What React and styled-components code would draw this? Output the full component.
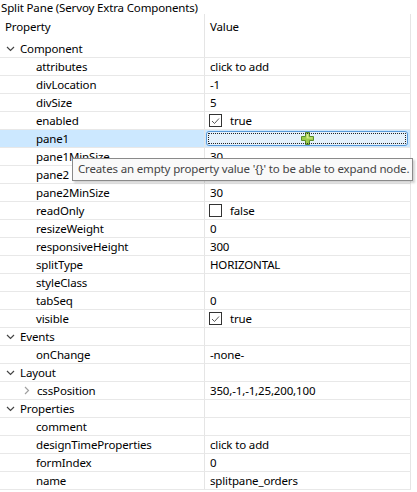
import styled, { createGlobalStyle } from "styled-components";

const GlobalStyle = createGlobalStyle`
  html, body { margin: 0; padding: 0; background: #ffffff; }
  body {
    font-family: "Segoe UI", "Noto Sans", "Open Sans", sans-serif;
    font-size: 11.5px;
    letter-spacing: -0.15px;
    color: #000;
  }
`;

const Panel = styled.div`
  position: relative;
  width: 417px;
  height: 492px;
  overflow: hidden;
  background: #ffffff;
`;

const Title = styled.div`
  height: 14px;
  line-height: 15px;
  padding-left: 1px;
  white-space: nowrap;
`;

const Grid = styled.div`
  display: grid;
  grid-template-columns: 205px 206px;
`;

const HeadCell = styled.div`
  height: 26px;
  box-sizing: border-box;
  padding: 5px 0 0 5px;
  border-right: 1px solid #e5e5e5;
`;

const Cell = styled.div`
  position: relative;
  height: 18px;
  box-sizing: border-box;
  display: flex;
  align-items: center;
  padding-left: ${(p) => p.$indent ?? 5}px;
  border-right: 1px solid #e5e5e5;
  border-bottom: 1px solid #e8e8e8;
  background: ${(p) => (p.$selected ? "#cce8ff" : "#ffffff")};
  white-space: nowrap;
  line-height: 17px;
`;

const Twisty = styled.span`
  display: inline-flex;
  width: ${(p) => p.$w}px;
  justify-content: flex-start;
  align-items: center;
`;

const Check = styled.span`
  width: 11px;
  height: 11px;
  border: 1px solid #333;
  margin: 0 8px 0 -1px;
  display: inline-flex;
  align-items: center;
  justify-content: center;
  background: #fff;
`;

const Editor = styled.div`
  flex: 1;
  height: 15px;
  margin: 0 2px 0 -4px;
  box-sizing: border-box;
  border: 1px solid #5a9ad8;
  border-radius: 3px;
  background: #e5f1fb;
  outline: 1px dotted #222;
  outline-offset: -3px;
  display: flex;
  align-items: center;
  justify-content: center;
`;

const Tooltip = styled.div`
  position: absolute;
  left: 72px;
  top: 158px;
  width: 341px;
  height: 23px;
  box-sizing: border-box;
  border: 1px solid #8a8a8a;
  background: #f9f9f9;
  color: #444;
  padding-left: 5px;
  line-height: 20px;
  white-space: nowrap;
  box-shadow: 2px 2px 2px rgba(0, 0, 0, 0.18);
`;

const Down = () => (
  <svg width="9" height="6" viewBox="0 0 9 6">
    <path d="M1 1 L4.5 4.5 L8 1" fill="none" stroke="#444" strokeWidth="1.2" />
  </svg>
);

const Right = () => (
  <svg width="6" height="9" viewBox="0 0 6 9">
    <path d="M1 1 L4.5 4.5 L1 8" fill="none" stroke="#a0a0a0" strokeWidth="1.2" />
  </svg>
);

const Tick = () => (
  <svg width="9" height="8" viewBox="0 0 9 8">
    <path d="M1 4 L3.5 6.5 L8 1.5" fill="none" stroke="#444" strokeWidth="0.9" />
  </svg>
);

const Plus = () => (
  <svg width="13" height="13" viewBox="0 0 13 13">
    <path d="M4.5 0.5 H8.5 V4.5 H12.5 V8.5 H8.5 V12.5 H4.5 V8.5 H0.5 V4.5 H4.5 Z" fill="#9ccb4a" stroke="#5a8f2a" strokeWidth="1" />
    <path d="M5.5 1.5 H7.5 V5.5 H11.5 V6.5 H5.5 Z" fill="#d6ec8a" />
  </svg>
);

const rows = [
  { cat: "Component" },
  { name: "attributes", value: "click to add" },
  { name: "divLocation", value: "-1" },
  { name: "divSize", value: "5" },
  { name: "enabled", check: true, value: "true" },
  { name: "pane1", editor: true },
  { name: "pane1MinSize", value: "30" },
  { name: "pane2", value: "none" },
  { name: "pane2MinSize", value: "30" },
  { name: "readOnly", check: false, value: "false" },
  { name: "resizeWeight", value: "0" },
  { name: "responsiveHeight", value: "300" },
  { name: "splitType", value: "HORIZONTAL" },
  { name: "styleClass", value: "" },
  { name: "tabSeq", value: "0" },
  { name: "visible", check: true, value: "true" },
  { cat: "Events" },
  { name: "onChange", value: "-none-" },
  { cat: "Layout" },
  { name: "cssPosition", value: "350,-1,-1,25,200,100", expand: true },
  { cat: "Properties" },
  { name: "comment", value: "" },
  { name: "designTimeProperties", value: "click to add" },
  { name: "formIndex", value: "0" },
  { name: "name", value: "splitpane_orders" },
];

function Row({ row }) {
  if (row.cat) {
    return (
      <>
        <Cell $indent={6}>
          <Twisty $w={14}><Down /></Twisty>
          {row.cat}
        </Cell>
        <Cell />
      </>
    );
  }
  return (
    <>
      <Cell $indent={row.expand ? 24 : 36} $selected={row.editor}>
        {row.expand && <Twisty $w={13}><Right /></Twisty>}
        {row.name}
      </Cell>
      <Cell $selected={row.editor}>
        {row.editor ? (
          <Editor><Plus /></Editor>
        ) : row.check !== undefined ? (
          <>
            <Check>{row.check && <Tick />}</Check>
            {row.value}
          </>
        ) : (
          row.value
        )}
      </Cell>
    </>
  );
}

export default function App() {
  return (
    <Panel>
      <GlobalStyle />
      <Title>Split Pane (Servoy Extra Components)</Title>
      <Grid>
        <HeadCell>Property</HeadCell>
        <HeadCell>Value</HeadCell>
        {rows.map((r, i) => (
          <Row key={i} row={r} />
        ))}
      </Grid>
      <Tooltip>Creates an empty property value '{"{}"}' to be able to expand node.</Tooltip>
    </Panel>
  );
}
